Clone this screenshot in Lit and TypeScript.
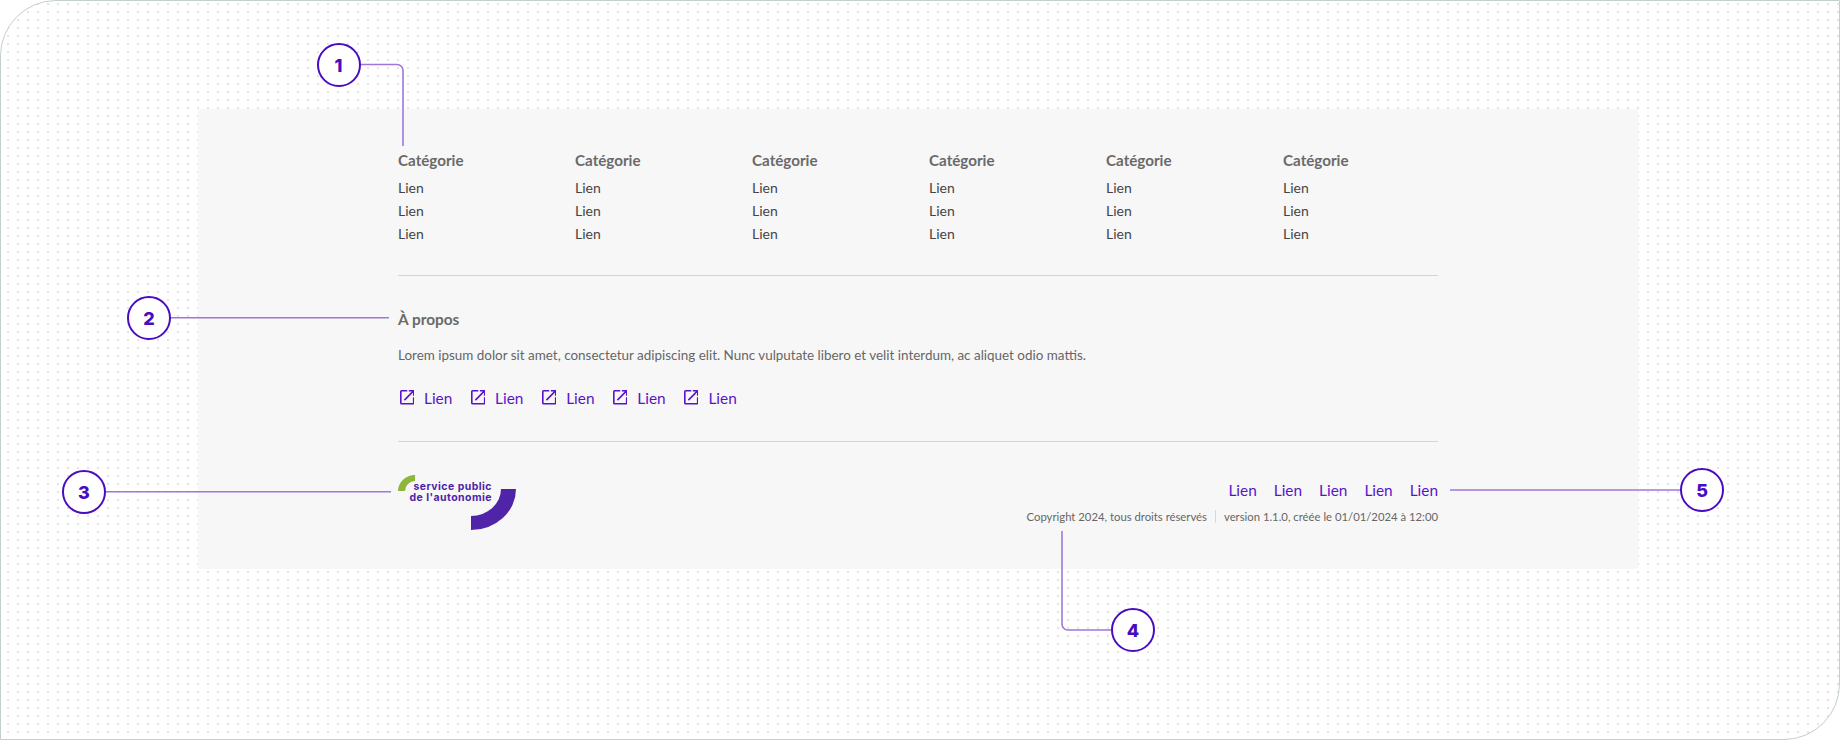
import { LitElement, css, html, svg } from "lit";
import { customElement } from "lit/decorators.js";

const columns = [0, 1, 2, 3, 4, 5];
const rows = [0, 1, 2];

// numbered markers: centre of the circle and the leader drawn from it
const markers = [
  { n: 1, x: 338.5, y: 65, d: "M360 64.500H397a6 6 0 0 1 6 6V146" },
  { n: 2, x: 149, y: 318, d: "M170.500 317.750H389" },
  { n: 3, x: 84, y: 492, d: "M105.500 491.750H391" },
  { n: 4, x: 1133, y: 630, d: "M1111 630H1068a6 6 0 0 1 -6 -6V531" },
  { n: 5, x: 1702, y: 490, d: "M1681 490H1450" },
];

@customElement("app-root")
export class AppRoot extends LitElement {
  static styles = css`
    :host {
      display: block;
      width: 1840px;
      height: 740px;
      position: relative;
      overflow: hidden;
      background: #fff;
      font-family: "Lato", "Open Sans", sans-serif;
      color: #666;
    }

    .frame {
      box-sizing: border-box;
      width: 1840px;
      height: 740px;
      border: 1px solid #c3cfcc;
      border-radius: 56px 0 56px 0;
      padding: 108px 0 0 197px;
      background-image: radial-gradient(circle at 1px 1px, #e3e3e3 1px, transparent 1.3px);
      background-size: 10px 8px;
      background-position: 6px 2px;
    }

    .panel {
      box-sizing: border-box;
      width: 1440px;
      height: 460px;
      background: #f7f7f7;
      padding: 39px 200px 0;
    }

    .cats {
      display: grid;
      grid-template-columns: repeat(6, 177px);
      padding-bottom: 30px;
      border-bottom: 1px solid #d4d4d4;
    }

    .cat-title {
      font-size: 15.2px;
      font-weight: 700;
      line-height: 24px;
      margin-bottom: 4px;
      color: #6a6a6a;
    }

    .cat-link {
      font-size: 14px;
      line-height: 23px;
      color: #444;
    }

    .about {
      padding: 31px 0 31.5px;
      border-bottom: 1px solid #d4d4d4;
    }

    .about h2 {
      margin: 0;
      font-size: 15.4px;
      font-weight: 700;
      line-height: 24px;
      color: #6a6a6a;
    }

    .about p {
      margin: 12px 0 0;
      font-size: 13.45px;
      line-height: 24px;
    }

    .ext-links {
      display: flex;
      gap: 16.8px;
      margin-top: 18.5px;
    }

    .ext-link {
      display: flex;
      align-items: center;
      gap: 10px;
      color: #5a14c8;
      font-size: 15.4px;
      line-height: 24px;
    }

    .ext-link svg {
      display: block;
      width: 14.5px;
      height: 14.5px;
      margin-left: 1.5px;
      fill: currentColor;
    }

    .bottom {
      display: flex;
      justify-content: space-between;
      padding-top: 35.5px;
    }

    .logo {
      position: relative;
      width: 120px;
      height: 56px;
      margin-top: -4px;
    }

    .logo svg {
      position: absolute;
      left: 0;
      top: 0;
    }

    .logo-text {
      position: absolute;
      right: 26px;
      top: 7px;
      text-align: right;
      font-family: "Inter", sans-serif;
      font-size: 10.5px;
      font-weight: 700;
      letter-spacing: 0.45px;
      line-height: 11px;
      color: #4f24a8;
      white-space: nowrap;
    }

    .legal {
      display: flex;
      flex-direction: column;
      align-items: flex-end;
      gap: 5px;
    }

    .legal-links {
      display: flex;
      gap: 17px;
      color: #5a14c8;
      font-size: 15.4px;
      line-height: 24px;
    }

    .legal-text {
      display: flex;
      align-items: center;
      font-size: 11.3px;
      line-height: 20px;
      white-space: nowrap;
    }

    .sep {
      width: 1px;
      height: 13px;
      background: #d8d8d8;
      margin: 0 8px;
    }

    .leaders {
      position: absolute;
      inset: 0;
      pointer-events: none;
    }

    .marker {
      position: absolute;
      box-sizing: border-box;
      width: 44px;
      height: 44px;
      margin: -22px 0 0 -22px;
      display: flex;
      align-items: center;
      justify-content: center;
      border: 2px solid #4a0cc0;
      border-radius: 50%;
      background: #fff;
      color: #4a0cc0;
      font-family: "Inter", sans-serif;
      font-size: 18px;
      font-weight: 800;
    }
  `;

  render() {
    return html`
      <div class="frame">
        <div class="panel">
          <div class="cats">
            ${columns.map(
              () => html`<div>
                <div class="cat-title">Catégorie</div>
                ${rows.map(() => html`<div class="cat-link">Lien</div>`)}
              </div>`
            )}
          </div>
          <div class="about">
            <h2>À propos</h2>
            <p>
              Lorem ipsum dolor sit amet, consectetur adipiscing elit. Nunc
              vulputate libero et velit interdum, ac aliquet odio mattis.
            </p>
            <div class="ext-links">
              ${[0, 1, 2, 3, 4].map(
                () => html`<div class="ext-link">
                  <svg viewBox="3 3 18 18">
                    <path d="M19 19H5V5h7V3H5a2 2 0 0 0-2 2v14a2 2 0 0 0 2 2h14a2 2 0 0 0 2-2v-7h-2v7zM14 3v2h3.590l-9.830 9.830 1.410 1.410L19 6.410V10h2V3h-7z" />
                  </svg>
                  Lien
                </div>`
              )}
            </div>
          </div>
          <div class="bottom">
            <div class="logo">
              <svg width="120" height="56" viewBox="0 0 120 56">
                <path d="M0 17A17 16 0 0 1 17 1V7A10 10 0 0 0 7 17Z" fill="#8db63c" />
                <path d="M118 15A45 41 0 0 1 73 56V42A30 27 0 0 0 103 15Z" fill="#4f24a8" />
              </svg>
              <div class="logo-text">service public<br />de l'autonomie</div>
            </div>
            <div class="legal">
              <div class="legal-links">
                ${[0, 1, 2, 3, 4].map(() => html`<span>Lien</span>`)}
              </div>
              <div class="legal-text">
                <span>Copyright 2024, tous droits réservés</span>
                <span class="sep"></span>
                <span>version 1.1.0, créée le 01/01/2024 à 12:00</span>
              </div>
            </div>
          </div>
        </div>
      </div>
      <svg class="leaders" width="1840" height="740" fill="none" stroke="#a076dd" stroke-width="1.6">
        ${markers.map((m) => svg`<path d=${m.d} />`)}
      </svg>
      ${markers.map(
        (m) => html`<div class="marker" style="left:${m.x}px;top:${m.y}px">${m.n}</div>`
      )}
    `;
  }
}
